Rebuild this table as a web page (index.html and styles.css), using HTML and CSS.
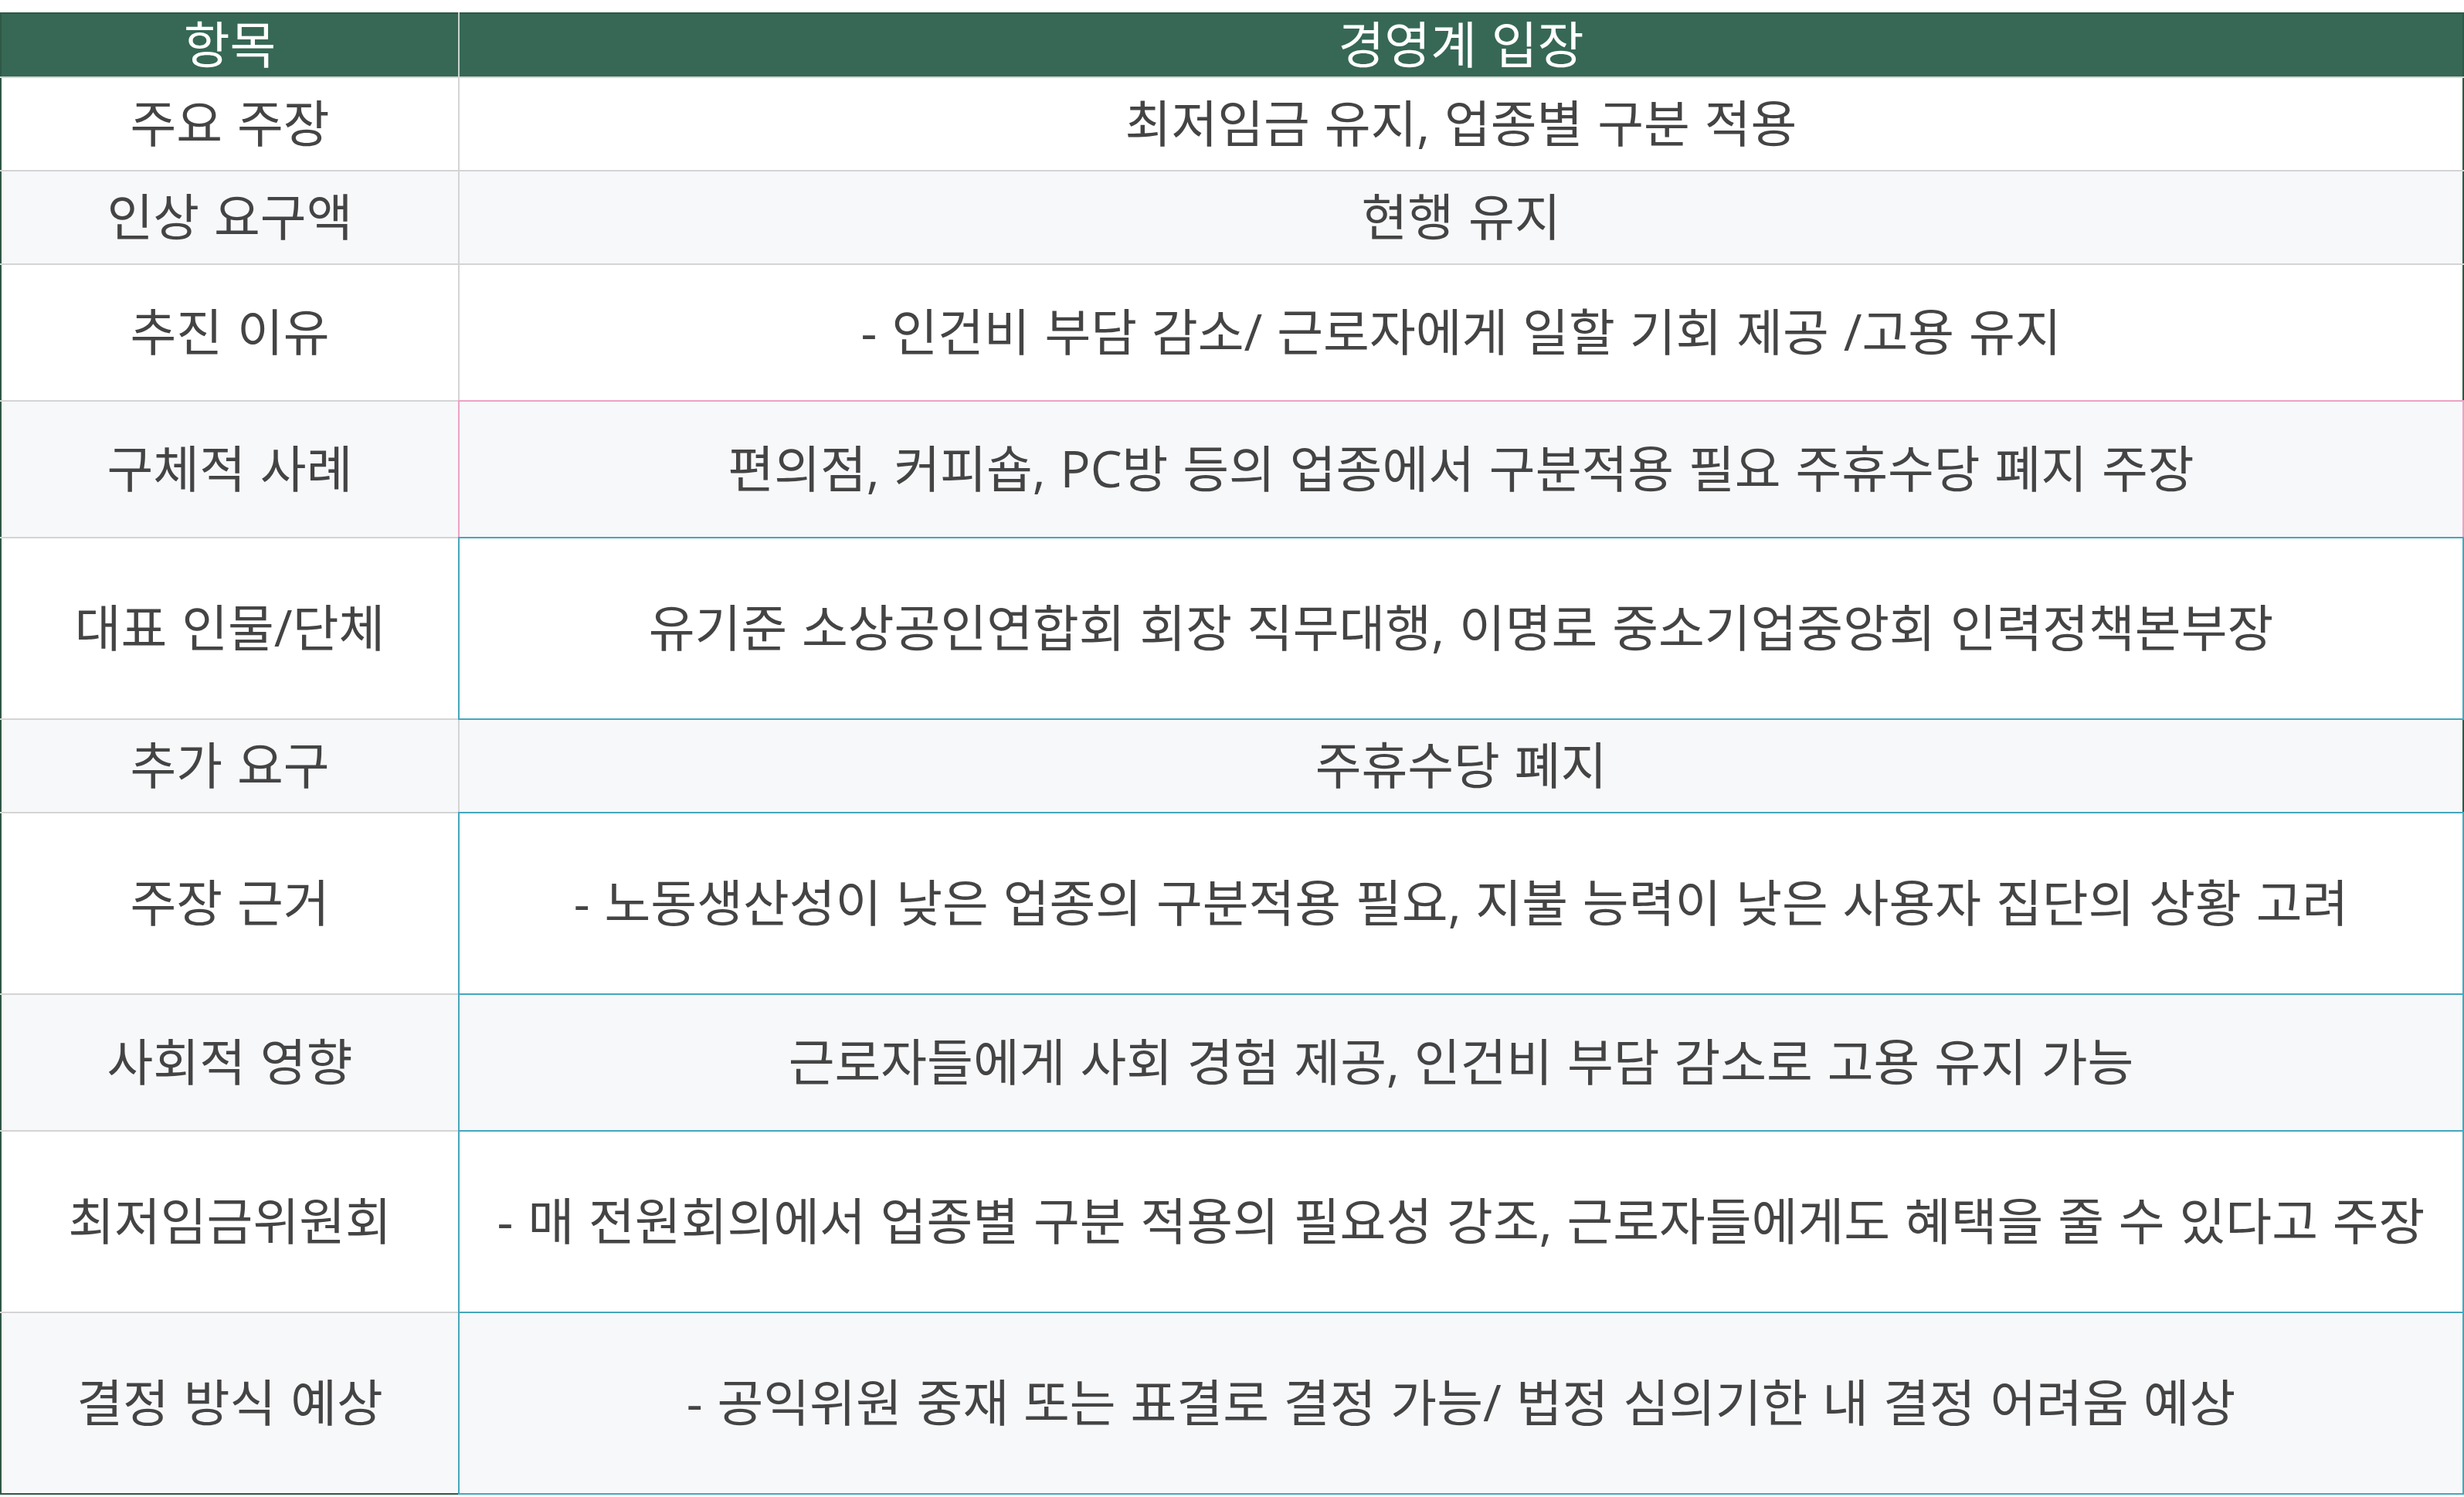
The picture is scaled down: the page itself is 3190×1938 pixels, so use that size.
FILE: index.html
```html
<!DOCTYPE html>
<html lang="ko">
<head>
<meta charset="utf-8">
<title>경영계 입장</title>
<link rel="stylesheet" href="styles.css">
</head>
<body>
<table class="position-table">
  <thead>
    <tr class="head-row">
      <th class="col-item">항목</th>
      <th class="col-detail">경영계 입장</th>
    </tr>
  </thead>
  <tbody>
    <tr class="span-2">
      <td>주요 주장</td>
      <td>최저임금 유지, 업종별 구분 적용</td>
    </tr>
    <tr class="span-2">
      <td>인상 요구액</td>
      <td>현행 유지</td>
    </tr>
    <tr class="span-3">
      <td>추진 이유</td>
      <td>- 인건비 부담 감소/ 근로자에게 일할 기회 제공 /고용 유지</td>
    </tr>
    <tr class="span-3">
      <td>구체적 사례</td>
      <td class="mark-pink">편의점, 커피숍, PC방 등의 업종에서 구분적용 필요 주휴수당 폐지 주장</td>
    </tr>
    <tr class="span-4">
      <td>대표 인물/단체</td>
      <td class="mark-teal">유기준 소상공인연합회 회장 직무대행, 이명로 중소기업중앙회 인력정책본부장</td>
    </tr>
    <tr class="span-2">
      <td>추가 요구</td>
      <td>주휴수당 폐지</td>
    </tr>
    <tr class="span-4">
      <td>주장 근거</td>
      <td class="mark-teal">- 노동생산성이 낮은 업종의 구분적용 필요, 지불 능력이 낮은 사용자 집단의 상황 고려</td>
    </tr>
    <tr class="span-3">
      <td>사회적 영향</td>
      <td class="mark-teal">근로자들에게 사회 경험 제공, 인건비 부담 감소로 고용 유지 가능</td>
    </tr>
    <tr class="span-4">
      <td>최저임금위원회</td>
      <td class="mark-teal">- 매 전원회의에서 업종별 구분 적용의 필요성 강조, 근로자들에게도 혜택을 줄 수 있다고 주장</td>
    </tr>
    <tr class="span-4">
      <td>결정 방식 예상</td>
      <td class="mark-teal">- 공익위원 중재 또는 표결로 결정 가능/ 법정 심의기한 내 결정 어려움 예상</td>
    </tr>
  </tbody>
</table>
</body>
</html>
```

FILE: styles.css
```css
html, body {
  margin: 0;
  padding: 0;
  background: #ffffff;
}

.position-table {
  width: 100%;
  margin-top: 16px;
  border-collapse: collapse;
  table-layout: fixed;
  font-family: "Open Sans", "Noto Sans CJK KR", sans-serif;
  font-size: 65px;
  line-height: 1.15;
  word-spacing: 2px;
  color: #444444;
}

.position-table th,
.position-table td {
  border: 2px solid #d4d4d4;
  padding: 0 6px 3px;
  text-align: center;
  vertical-align: middle;
  white-space: nowrap;
}

.col-item {
  width: 579px;
}

/* outer frame */
.position-table tr > :first-child {
  border-left-color: #2f5846;
}
.position-table tr > :last-child {
  border-right-color: #2f5846;
}
.position-table thead th {
  border-top-color: #2f5846;
}
.position-table tbody tr:last-child td {
  border-bottom-color: #2f5846;
}

/* header */
.head-row {
  height: 83px;
}
.head-row th {
  background: #366855;
  color: #ffffff;
  font-weight: 400;
  border-bottom-color: #d4d4d4;
}
.head-row th.col-item {
  border-right-color: #c9d3ce;
}

/* body rows */
.position-table tbody tr:nth-child(even) td {
  background: #f7f8fa;
}
.position-table tbody tr:nth-child(odd) td {
  background: #ffffff;
}

.span-2 { height: 121px; }
.span-3 { height: 177px; }
.span-4 { height: 235px; }

/* highlighted cells */
.mark-pink {
  outline: 2px solid #eda2c3;
  outline-offset: -1px;
}
.mark-teal {
  outline: 2px solid #45a6bd;
  outline-offset: -1px;
}
```
